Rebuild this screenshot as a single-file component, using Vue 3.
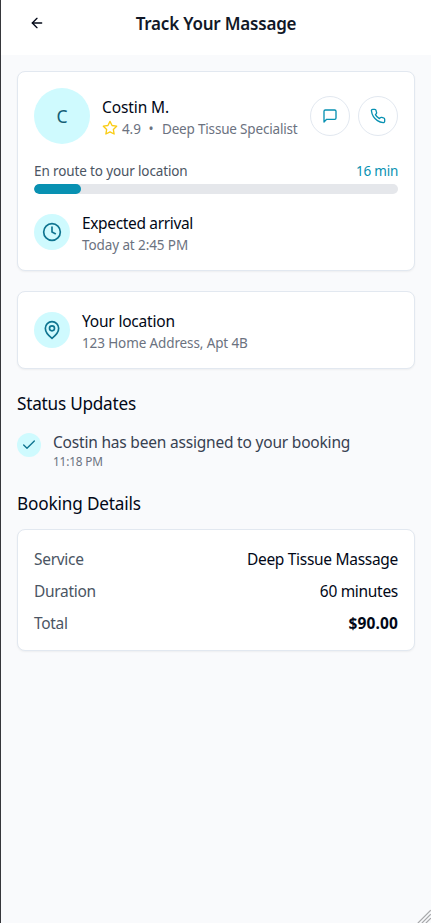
<script setup>
const booking = [
  { label: 'Service', value: 'Deep Tissue Massage', cls: 'v-service' },
  { label: 'Duration', value: '60 minutes', cls: 'v-duration' },
  { label: 'Total', value: '$90.00', cls: 'v-total' },
]
const progress = 13
</script>

<template>
  <div class="page">
    <header class="header">
      <button class="back" aria-label="Back">
        <svg class="icon" viewBox="0 0 24 24"><path d="m12 19-7-7 7-7" /><path d="M19 12H5" /></svg>
      </button>
      <h1>Track Your Massage</h1>
      <div class="spacer"></div>
    </header>

    <main class="content">
      <section class="card">
        <div class="therapist">
          <div class="avatar">C</div>
          <div class="info">
            <div class="name">Costin M.</div>
            <div class="meta">
              <svg class="icon star" viewBox="0 0 24 24"><polygon points="12 2 15.09 8.26 22 9.27 17 14.14 18.18 21.02 12 17.77 5.82 21.02 7 14.14 2 9.27 8.91 8.26 12 2" /></svg>
              <span class="rating">4.9</span>
              <span class="dot">•</span>
              <span class="role">Deep Tissue Specialist</span>
            </div>
          </div>
          <div class="actions">
            <button class="round" aria-label="Message">
              <svg class="icon" viewBox="0 0 24 24"><path d="M21 15a2 2 0 0 1-2 2H7l-4 4V5a2 2 0 0 1 2-2h14a2 2 0 0 1 2 2z" /></svg>
            </button>
            <button class="round" aria-label="Call">
              <svg class="icon" viewBox="0 0 24 24"><path d="M22 16.92v3a2 2 0 0 1-2.18 2 19.79 19.79 0 0 1-8.63-3.07 19.5 19.5 0 0 1-6-6 19.79 19.79 0 0 1-3.07-8.67A2 2 0 0 1 4.11 2h3a2 2 0 0 1 2 1.72 12.84 12.84 0 0 0 .7 2.81 2 2 0 0 1-.45 2.11L8.09 9.91a16 16 0 0 0 6 6l1.27-1.27a2 2 0 0 1 2.11-.45 12.84 12.84 0 0 0 2.81.7A2 2 0 0 1 22 16.92z" /></svg>
            </button>
          </div>
        </div>
        <div class="route">
          <span class="route-label">En route to your location</span>
          <span class="eta">16 min</span>
        </div>
        <div class="track"><div class="fill" :style="{ width: progress + '%' }"></div></div>
        <div class="item arrival">
          <div class="badge">
            <svg class="icon large" viewBox="0 0 24 24"><circle cx="12" cy="12" r="10" /><polyline points="12 6 12 12 16 14" /></svg>
          </div>
          <div class="item-body">
            <div class="item-title t-arrival">Expected arrival</div>
            <div class="item-sub s-arrival">Today at 2:45 PM</div>
          </div>
        </div>
      </section>

      <section class="card">
        <div class="item">
          <div class="badge">
            <svg class="icon large" viewBox="0 0 24 24"><path d="M20 10c0 6-8 12-8 12s-8-6-8-12a8 8 0 0 1 16 0Z" /><circle cx="12" cy="10" r="3" /></svg>
          </div>
          <div class="item-body">
            <div class="item-title">Your location</div>
            <div class="item-sub">123 Home Address, Apt 4B</div>
          </div>
        </div>
      </section>

      <section>
        <h2>Status Updates</h2>
        <div class="update">
          <div class="check">
            <svg class="icon" viewBox="0 0 24 24"><path d="M20 6 9 17l-5-5" /></svg>
          </div>
          <div class="update-body">
            <div class="update-text">Costin has been assigned to your booking</div>
            <div class="update-time">11:18 PM</div>
          </div>
        </div>
      </section>

      <section>
        <h2 class="h-booking">Booking Details</h2>
        <div class="card details">
          <div v-for="row in booking" :key="row.label" class="row">
            <span class="label">{{ row.label }}</span>
            <span class="value" :class="row.cls">{{ row.value }}</span>
          </div>
        </div>
      </section>
    </main>
    <svg class="grip" viewBox="0 0 15 15"><path d="M2 15 15 2M6 15l9-9M10 15l5-5" /></svg>
  </div>
</template>

<style>
body {
  margin: 0;
}
</style>

<style scoped>
.page {
  position: relative;
  box-sizing: border-box;
  height: 923px;
  overflow: hidden;
  border-left: 1px solid #36373b;
  background: #f9fafc;
  color: #020817;
  font-family: "Noto Sans", sans-serif;
  font-size: 15.5px;
  line-height: 24px;
  white-space: nowrap;
}
.header {
  display: flex;
  align-items: center;
  box-sizing: border-box;
  height: 55px;
  padding: 0 16px 9px;
  background: #fff;
}
.back {
  display: flex;
  align-items: center;
  justify-content: center;
  width: 40px;
  height: 40px;
  padding: 0;
  border: 0;
  background: none;
  color: #020817;
}
h1 {
  flex: 1;
  margin: 0;
  padding-top: 2px;
  text-align: center;
  font-size: 17px;
  line-height: 28px;
  font-weight: 600;
  letter-spacing: -0.2px;
  color: #111827;
}
.spacer {
  width: 40px;
}
.icon {
  display: block;
  width: 16px;
  height: 16px;
  flex: none;
  fill: none;
  stroke: currentColor;
  stroke-width: 2;
  stroke-linecap: round;
  stroke-linejoin: round;
}
.large {
  width: 20px;
  height: 20px;
}
.content {
  display: flex;
  flex-direction: column;
  gap: 20px;
  padding: 16px;
}
.card {
  padding: 16px;
  border: 1px solid #e2e8f0;
  border-radius: 8px;
  background: #fff;
  box-shadow: 0 1px 2px rgba(0, 0, 0, 0.05);
}
.therapist {
  display: flex;
  align-items: center;
}
.avatar {
  display: flex;
  align-items: center;
  justify-content: center;
  width: 56px;
  height: 56px;
  margin-right: 12px;
  border-radius: 50%;
  background: #cffafe;
  color: #155e75;
  font-size: 17.5px;
}
.info {
  flex: 1;
  padding-top: 2px;
}
.name {
  letter-spacing: -0.1px;
}
.meta {
  display: flex;
  align-items: center;
  height: 20px;
  font-size: 13.5px;
  line-height: 20px;
  color: #6b7280;
}
.star {
  color: #facc15;
  margin: -2px 4px 0 0;
}
.rating {
  width: 18px;
  letter-spacing: -0.1px;
}
.dot {
  width: 22px;
  text-align: center;
}
.role {
  letter-spacing: -0.18px;
}
.actions {
  display: flex;
  gap: 8px;
}
.round {
  display: flex;
  align-items: center;
  justify-content: center;
  box-sizing: border-box;
  width: 40px;
  height: 40px;
  padding: 0;
  border: 1px solid #e2e8f0;
  border-radius: 50%;
  background: #fff;
  color: #0891b2;
}
.route {
  display: flex;
  justify-content: space-between;
  margin: 17px 0 3px;
  font-size: 13.5px;
  line-height: 20px;
  color: #4b5563;
}
.route-label {
  letter-spacing: -0.13px;
}
.eta {
  letter-spacing: -0.25px;
  color: #0891b2;
}
.track {
  height: 10px;
  overflow: hidden;
  border-radius: 5px;
  background: #e5e7eb;
}
.fill {
  height: 100%;
  border-radius: 5px;
  background: #0891b2;
}
.item {
  display: flex;
  align-items: center;
  gap: 12px;
}
.item-body {
  padding-top: 1px;
  margin-bottom: -1px;
}
.arrival {
  margin-top: 16px;
}
.badge {
  display: flex;
  align-items: center;
  justify-content: center;
  width: 36px;
  height: 36px;
  border-radius: 50%;
  background: #cffafe;
  color: #0e7490;
}
.item-title {
  letter-spacing: -0.2px;
}
.t-arrival {
  letter-spacing: -0.35px;
}
.item-sub {
  font-size: 13.5px;
  line-height: 20px;
  letter-spacing: -0.12px;
  color: #6b7280;
}
.s-arrival {
  letter-spacing: -0.1px;
}
h2 {
  margin: 0 0 11px;
  padding-top: 1px;
  font-size: 17.2px;
  line-height: 28px;
  font-weight: 400;
  letter-spacing: -0.24px;
}
.h-booking {
  letter-spacing: -0.17px;
}
.update {
  display: flex;
  gap: 12px;
}
.check {
  display: flex;
  align-items: center;
  justify-content: center;
  width: 24px;
  height: 24px;
  margin-top: 4px;
  border-radius: 50%;
  background: #cffafe;
  color: #0e7490;
}
.update-body {
  padding-top: 1px;
  margin-bottom: -1px;
}
.update-text {
  letter-spacing: -0.2px;
  color: #374151;
}
.update-time {
  margin-top: -1px;
  padding-bottom: 1px;
  font-size: 11.8px;
  line-height: 16px;
  letter-spacing: -0.15px;
  color: #6b7280;
}
.details {
  display: flex;
  flex-direction: column;
  gap: 8px;
  padding: 17px 16px 15px;
}
.row {
  display: flex;
  justify-content: space-between;
}
.label {
  letter-spacing: -0.3px;
  color: #4b5563;
}
.value {
  letter-spacing: -0.3px;
}
.value.v-total {
  font-weight: 700;
  letter-spacing: 0.15px;
}
.grip {
  position: absolute;
  right: 0;
  bottom: 0;
  width: 15px;
  height: 15px;
  fill: none;
  stroke: #9a9b9d;
  stroke-width: 1.4;
  stroke-dasharray: 1 0.41;
}
</style>
